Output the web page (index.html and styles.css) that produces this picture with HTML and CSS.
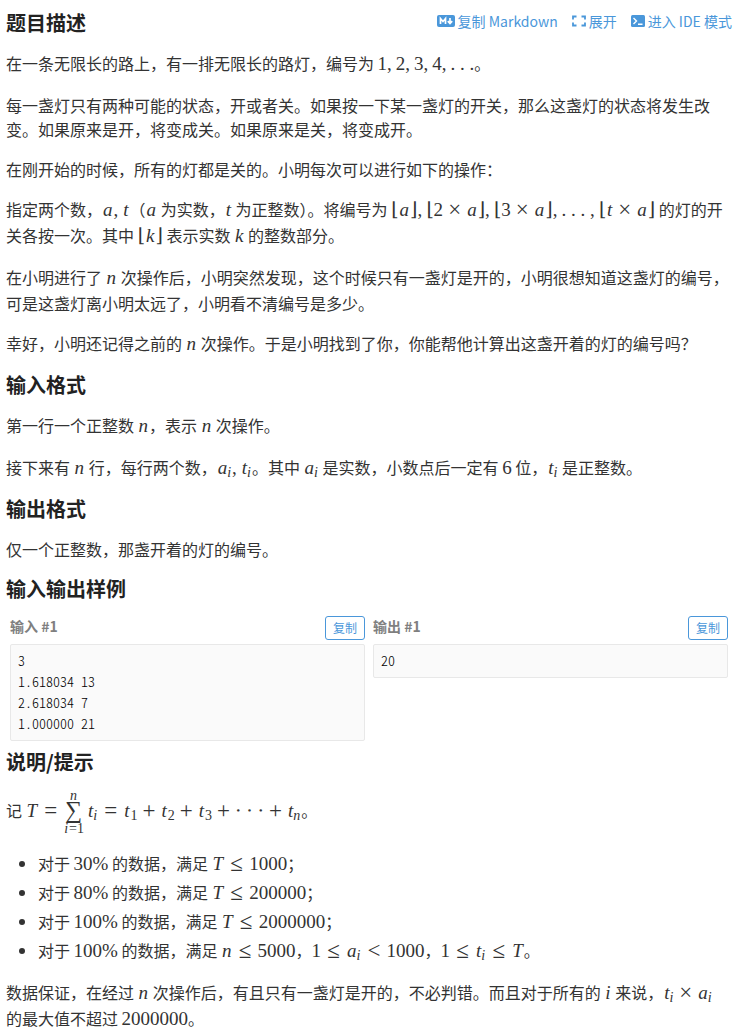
FILE: index.html
```html
<!DOCTYPE html>
<html lang="zh-CN">
<head>
  <meta charset="UTF-8">
  <meta name="viewport" content="width=device-width, initial-scale=1.0">
  <title>题目描述</title>
  <link rel="stylesheet" href="styles.css">
</head>
<body>
  <header class="problem-header">
    <h2>题目描述</h2>
    <nav class="actions">
      <a href="#markdown">
        <svg width="18" height="14" viewBox="0 0 18 14"><rect y="1" width="18" height="12" rx="2" fill="currentColor"/><path d="M3.500 10V4.500L6 7.500l2.500-3V10M13 4v5M10.800 7.200L13 9.500l2.200-2.300" fill="none" stroke="#fff" stroke-width="1.700"/></svg>
        <span>复制 Markdown</span>
      </a>
      <a href="#expand">
        <svg width="14" height="14" viewBox="0 0 14 14"><path d="M4.500 2.500H1v3M9.500 2.500H13v3M4.500 11.500H1v-3M9.500 11.500H13v-3" fill="none" stroke="currentColor" stroke-width="1.800"/></svg>
        <span>展开</span>
      </a>
      <a href="#ide">
        <svg width="14" height="14" viewBox="0 0 14 14"><rect y="1" width="14" height="12" rx="1.500" fill="currentColor"/><path d="M2.500 4l3 3-3 3M7 10.200h4.500" fill="none" stroke="#fff" stroke-width="1.400"/></svg>
        <span>进入 IDE 模式</span>
      </a>
    </nav>
  </header>

  <p>在一条无限长的路上，有一排无限长的路灯，编号为 <span class="math">1<b>,</b>2<b>,</b>3<b>,</b>4<b>,</b>. . .</span>。</p>
  <p>每一盏灯只有两种可能的状态，开或者关。如果按一下某一盏灯的开关，那么这盏灯的状态将发生改变。如果原来是开，将变成关。如果原来是关，将变成开。</p>
  <p>在刚开始的时候，所有的灯都是关的。小明每次可以进行如下的操作：</p>
  <p>指定两个数，<span class="math"><i>a</i><b>,</b><i>t</i></span>（<span class="math"><i>a</i></span> 为实数，<span class="math"><i>t</i></span> 为正整数）。将编号为 <span class="math">⌊<i>a</i>⌋<b>,</b>⌊2<span class="bin">×</span><i>a</i>⌋<b>,</b>⌊3<span class="bin">×</span><i>a</i>⌋<b>,</b>. . . <b>,</b>⌊<i>t</i><span class="bin">×</span><i>a</i>⌋</span> 的灯的开关各按一次。其中 <span class="math">⌊<i>k</i>⌋</span> 表示实数 <span class="math"><i>k</i></span> 的整数部分。</p>
  <p>在小明进行了 <span class="math"><i>n</i></span> 次操作后，小明突然发现，这个时候只有一盏灯是开的，小明很想知道这盏灯的编号，可是这盏灯离小明太远了，小明看不清编号是多少。</p>
  <p>幸好，小明还记得之前的 <span class="math"><i>n</i></span> 次操作。于是小明找到了你，你能帮他计算出这盏开着的灯的编号吗？</p>

  <h2>输入格式</h2>
  <p>第一行一个正整数 <span class="math"><i>n</i></span>，表示 <span class="math"><i>n</i></span> 次操作。</p>
  <p>接下来有 <span class="math"><i>n</i></span> 行，每行两个数，<span class="math"><i>a<sub>i</sub></i><b>,</b><i>t<sub>i</sub></i></span>。其中 <span class="math"><i>a<sub>i</sub></i></span> 是实数，小数点后一定有 <span class="math">6</span> 位，<span class="math"><i>t<sub>i</sub></i></span> 是正整数。</p>

  <h2>输出格式</h2>
  <p>仅一个正整数，那盏开着的灯的编号。</p>

  <h2>输入输出样例</h2>
  <div class="samples">
    <section class="sample">
      <div class="sample-title">
        <h3>输入 #1</h3>
        <button type="button">复制</button>
      </div>
      <pre>3
1.618034 13
2.618034 7
1.000000 21</pre>
    </section>
    <section class="sample">
      <div class="sample-title">
        <h3>输出 #1</h3>
        <button type="button">复制</button>
      </div>
      <pre>20</pre>
    </section>
  </div>

  <h2>说明/提示</h2>
  <p>记 <span class="math"><i>T</i><span class="rel">=</span><span class="sum"><small><i>n</i></small><span class="sigma">∑</span><small><i>i</i>=1</small></span><i>t<sub>i</sub></i><span class="rel">=</span><i>t</i><sub>1</sub><span class="bin">+</span><i>t</i><sub>2</sub><span class="bin">+</span><i>t</i><sub>3</sub><span class="bin">+</span>⋅ ⋅ ⋅<span class="bin">+</span><i>t<sub>n</sub></i></span>。</p>
  <ul>
    <li>对于 <span class="math">30%</span> 的数据，满足 <span class="math"><i>T</i><span class="rel">≤</span>1000</span>；</li>
    <li>对于 <span class="math">80%</span> 的数据，满足 <span class="math"><i>T</i><span class="rel">≤</span>200000</span>；</li>
    <li>对于 <span class="math">100%</span> 的数据，满足 <span class="math"><i>T</i><span class="rel">≤</span>2000000</span>；</li>
    <li>对于 <span class="math">100%</span> 的数据，满足 <span class="math"><i>n</i><span class="rel">≤</span>5000</span>，<span class="math">1<span class="rel">≤</span><i>a<sub>i</sub></i><span class="rel">&lt;</span>1000</span>，<span class="math">1<span class="rel">≤</span><i>t<sub>i</sub></i><span class="rel">≤</span><i>T</i></span>。</li>
  </ul>
  <p>数据保证，在经过 <span class="math"><i>n</i></span> 次操作后，有且只有一盏灯是开的，不必判错。而且对于所有的 <span class="math"><i>i</i></span> 来说，<span class="math"><i>t<sub>i</sub></i><span class="bin">×</span><i>a<sub>i</sub></i></span> 的最大值不超过 <span class="math">2000000</span>。</p>
</body>
</html>
```
FILE: styles.css
```css
body {
  margin: 0;
  padding: 11px 12px 0 6px;
  font-family: "Noto Sans CJK SC", sans-serif;
  font-size: 16px;
  line-height: 24px;
  color: #333;
  background: #fff;
}
h2 {
  margin: 16px 0;
  font-size: 20px;
  line-height: 24px;
  font-weight: bold;
  color: #222;
}
p {
  margin: 16px 0;
}
.problem-header {
  display: flex;
  justify-content: space-between;
  align-items: flex-start;
}
.problem-header h2 {
  margin: 0;
}
.actions {
  display: flex;
  gap: 14px;
}
.actions a {
  display: flex;
  align-items: center;
  gap: 3px;
  font-size: 14px;
  line-height: 20px;
  color: #4a97da;
  text-decoration: none;
}

/* 公式 */
.math {
  font-family: "Liberation Serif", "DejaVu Serif", serif;
  font-size: 19px;
  line-height: 26px;
  white-space: nowrap;
}
.math i {
  padding: 0 1px;
}
.math b {
  font-weight: normal;
  margin-right: 4px;
}
.math sub {
  font-size: 14px;
  line-height: 0;
  vertical-align: -3px;
}
.bin,
.rel {
  display: inline-block;
  width: 15px;
  margin: 0 4px;
  font-size: 23px;
  line-height: 20px;
  text-align: center;
  vertical-align: -1px;
}
.rel {
  margin: 0 5px;
}
.sum {
  display: inline-flex;
  flex-direction: column;
  align-items: center;
  margin-right: 3px;
  vertical-align: middle;
}
.sum small {
  font-size: 14px;
  line-height: 12px;
}
.sigma {
  padding-bottom: 5px;
  font-size: 24px;
  line-height: 16px;
}

/* 样例 */
.samples {
  display: flex;
  align-items: flex-start;
  gap: 8px;
  margin: -1px 4px -7px;
}
.sample {
  flex: 1;
}
.sample-title {
  display: flex;
  justify-content: space-between;
  align-items: flex-start;
  margin-bottom: 4px;
}
.sample-title h3 {
  margin: 0;
  font-size: 14px;
  line-height: 20px;
  color: #7f7f7f;
}
.sample-title button {
  height: 24px;
  padding: 0 7px;
  border: 1px solid #4a97da;
  border-radius: 3px;
  background: #fff;
  color: #4a97da;
  font-family: inherit;
  font-size: 12px;
  line-height: 22px;
  cursor: pointer;
}
pre {
  margin: 0;
  padding: 5px 7px 6px;
  border: 1px solid #e8e8e8;
  border-radius: 2px;
  background: #fafafa;
  color: #000;
  font-family: "Noto Sans CJK SC", monospace;
  font-feature-settings: "hwid";
  font-weight: 300;
  font-size: 14px;
  line-height: 21px;
}
ul {
  margin: 16px 0;
  padding-left: 32px;
}
li + li {
  margin-top: 3px;
}
```
